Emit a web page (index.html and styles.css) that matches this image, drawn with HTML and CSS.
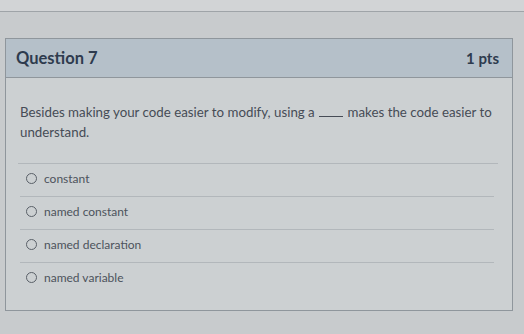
FILE: index.html
```html
<!DOCTYPE html>
<html lang="en">
<head>
	<meta charset="UTF-8">
	<title>Question 7</title>
	<link rel="stylesheet" href="styles.css">
</head>
<body>
	<div class="topBar"></div>
	<section class="question">
		<header class="qHeader">
			<h2>Question 7</h2>
			<span class="pts">1 pts</span>
		</header>
		<div class="qBody">
			<p class="qText"><span>Besides making your code easier to modify, using a</span> <span class="blank"></span> <span>makes the code easier to</span> <span>understand.</span></p>
			<ul class="answers">
				<li><span class="radio"></span>constant</li>
				<li><span class="radio"></span>named constant</li>
				<li><span class="radio"></span>named declaration</li>
				<li><span class="radio"></span>named variable</li>
			</ul>
		</div>
	</section>
</body>
</html>
```

FILE: styles.css
```css
body{
	margin:0;
	font-family:Lato,"Liberation Sans",sans-serif;
	background:#c8cbcd;
}
p,h2,ul,li{
	margin:0;
	padding:0;
	list-style:none;
}
.topBar{
	height:11px;
	background:#d2d4d6;
	border-bottom:1px solid #9fa4a8;
}
.question{
	margin:26px 11px 0 5px;
	border:1px solid #8f969c;
	background:#ccd0d2;
	height:271px;
}
.qHeader{
	display:flex;
	justify-content:space-between;
	align-items:center;
	height:38px;
	padding:0 13px 0 10px;
	background:#b5c0c9;
	border-bottom:1px solid #8f969c;
}
.qHeader h2{
	font-size:16.5px;
	font-weight:bold;
	color:#2e3b4e;
}
.pts{
	font-size:15px;
	font-weight:bold;
	color:#2e3b4e;
}
.qBody{
	padding:24px 18px 0 14px;
}
.qText{
	font-size:13.3px;
	line-height:20px;
	color:#464c56;
	margin:0 -4px 0 -2px;
	padding:0 4px 21px 2px;
	border-bottom:1px solid #b2b7bb;
}
.blank{
	display:inline-block;
	width:24px;
	height:1px;
	border-bottom:1px solid #464c56;
	margin:0 1px;
}
.answers li{
	display:flex;
	align-items:center;
	padding:0 0 4px 6px;
	box-sizing:border-box;
	height:33px;
	font-size:12px;
	color:#4d535c;
	border-bottom:1px solid #b2b7bb;
}
.answers li:last-child{
	border-bottom:0;
}
.radio{
	width:9px;
	height:9px;
	border:1px solid #5a6068;
	border-radius:50%;
	margin-right:7px;
}
```
